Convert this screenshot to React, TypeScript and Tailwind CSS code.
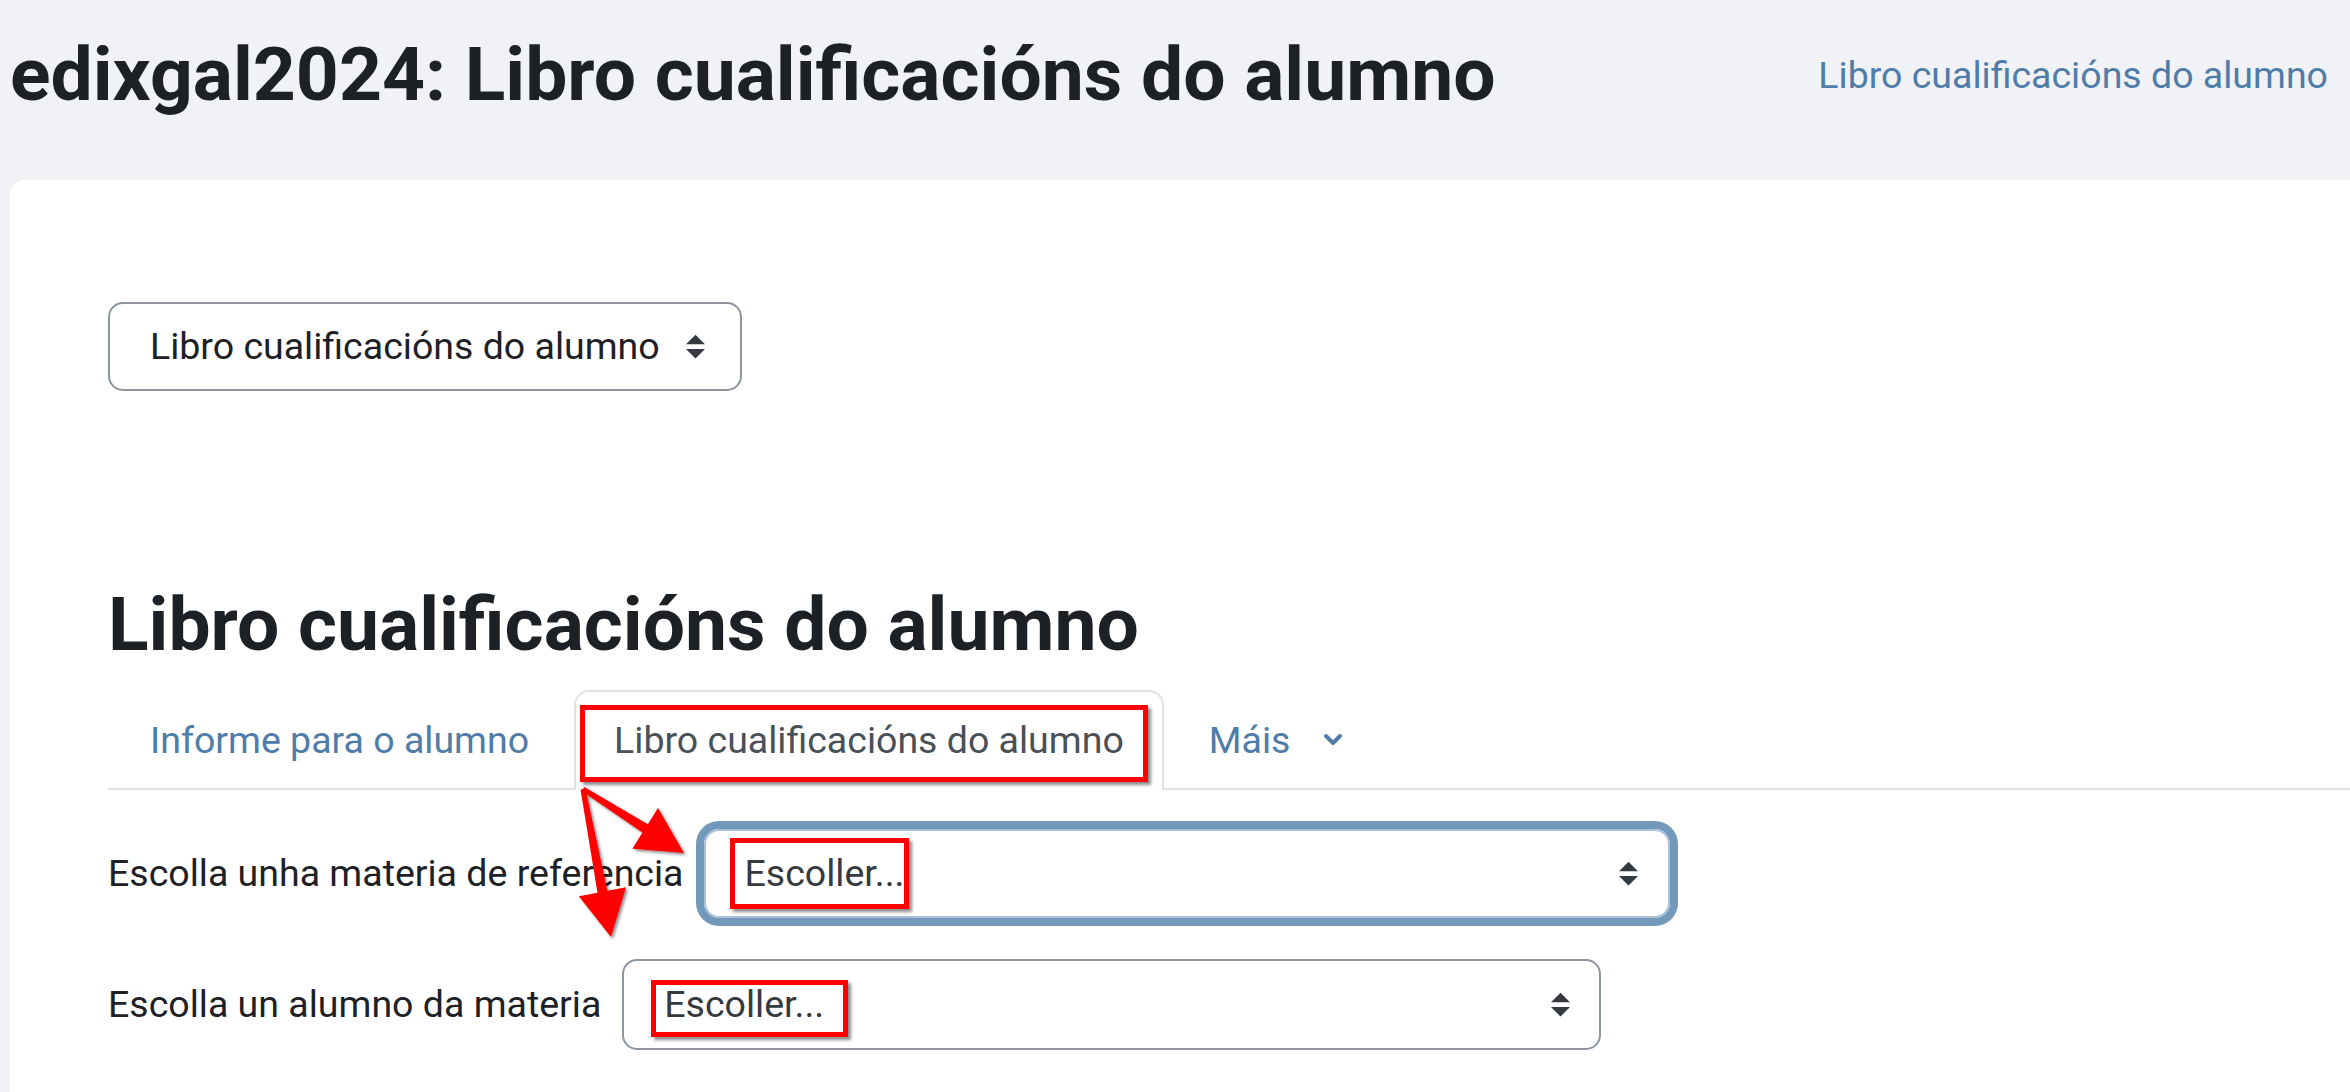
// Moodle-style gradebook page (zoomed) with red annotation boxes and arrows
import React from "react";

const FONT = { fontFamily: "Roboto, 'Noto Sans', 'Liberation Sans', sans-serif" };

// ─── Bootstrap-like select caret (up/down) ──────────────────────────────
function Caret() {
  return (
    <svg width="19" height="25" viewBox="0 0 4 5" className="shrink-0">
      <path d="M2 0L0 2h4zM2 5L0 3h4z" fill="#343a40" />
    </svg>
  );
}

function Chevron() {
  return (
    <svg width="20" height="14" viewBox="0 0 20 14" className="shrink-0">
      <polyline points="3,3 10,10 17,3" fill="none" stroke="#4f7ca8" strokeWidth="4" strokeLinecap="round" strokeLinejoin="round" />
    </svg>
  );
}

// ─── Arrow polygon (tapered shaft + head) ───────────────────────────────
function arrowPoints(x1: number, y1: number, x2: number, y2: number) {
  const dx = x2 - x1;
  const dy = y2 - y1;
  const len = Math.hypot(dx, dy);
  const ux = dx / len;
  const uy = dy / len;
  const nx = -uy;
  const ny = ux;
  const headLen = 46;
  const headW = 48;
  const s0 = 5;
  const s1 = 10;
  const bx = x2 - ux * headLen;
  const by = y2 - uy * headLen;
  const pts = [
    [x1 + (nx * s0) / 2, y1 + (ny * s0) / 2],
    [bx + (nx * s1) / 2, by + (ny * s1) / 2],
    [bx + (nx * headW) / 2, by + (ny * headW) / 2],
    [x2, y2],
    [bx - (nx * headW) / 2, by - (ny * headW) / 2],
    [bx - (nx * s1) / 2, by - (ny * s1) / 2],
    [x1 - (nx * s0) / 2, y1 - (ny * s0) / 2],
  ];
  return pts.map((p) => p.join(",")).join(" ");
}

function RedBox({ className }: { className: string }) {
  return (
    <div
      className={`absolute border-[5px] border-[#ff0000] shadow-[3px_3px_3px_rgba(0,0,0,0.45)] pointer-events-none ${className}`}
    />
  );
}

export default function App() {
  return (
    <div className="relative w-[2350px] h-[1092px] overflow-hidden bg-[#f0f2f6] text-[#1d2125]" style={FONT}>
      {/* ─── Page header ─────────────────────────────────────────────── */}
      <header className="flex justify-between items-start h-[180px] pt-[29px] pl-[10px] pr-[22px]">
        <h1 className="text-[75px] leading-[1.2] font-bold text-[#1d2125]">
          edixgal2024: Libro cualificacións do alumno
        </h1>
        <a className="mt-[24px] text-[37.5px] leading-[1.2] text-[#4f7ca8]">
          Libro cualificacións do alumno
        </a>
      </header>

      {/* ─── Main card ───────────────────────────────────────────────── */}
      <main className="ml-[10px] h-[912px] bg-white rounded-tl-[15px] pl-[98px] pt-[122px]">
        <div className="inline-flex items-center gap-[26px] h-[89px] pl-[40px] pr-[35px] border-2 border-[#8f959e] rounded-[15px] text-[37.5px] text-[#1d2125]">
          <span>Libro cualificacións do alumno</span>
          <Caret />
        </div>

        <h2 className="mt-[188px] text-[75px] leading-[1.2] font-bold text-[#1d2125]">
          Libro cualificacións do alumno
        </h2>

        {/* ─── Tabs ──────────────────────────────────────────────────── */}
        <nav className="mt-[21px] flex items-end border-b-2 border-[#dee2e6] text-[37.5px] leading-[56px]">
          <a className="px-[42px] pt-[22px] pb-[20px] text-[#4f7ca8]">Informe para o alumno</a>
          <a className="ml-[3px] -mb-[2px] px-[38px] pt-[20px] pb-[22px] bg-white border-2 border-b-0 border-[#dee2e6] rounded-t-[15px] text-[#495057]">
            Libro cualificacións do alumno
          </a>
          <a className="flex items-center gap-[33px] px-[45px] pt-[22px] pb-[20px] text-[#4f7ca8]">
            Máis
            <Chevron />
          </a>
        </nav>

        {/* ─── Form rows ─────────────────────────────────────────────── */}
        <div className="mt-[39px] flex flex-col gap-[41px] text-[37.5px]">
          <div className="flex items-center gap-[21px]">
            <label>Escolla unha materia de referencia</label>
            <div className="flex items-center justify-between w-[966px] h-[89px] pl-[38px] pr-[30px] border-2 border-[#a9c1d8] rounded-[15px] ring-[8px] ring-[#7399ba]">
              <span className="text-[#343a40]">Escoller...</span>
              <Caret />
            </div>
          </div>
          <div className="flex items-center gap-[21px]">
            <label>Escolla un alumno da materia</label>
            <div className="flex items-center justify-between w-[979px] h-[91px] pl-[40px] pr-[29px] border-2 border-[#8f959e] rounded-[15px]">
              <span className="text-[#343a40]">Escoller...</span>
              <Caret />
            </div>
          </div>
        </div>
      </main>

      {/* ─── Annotations ─────────────────────────────────────────────── */}
      <RedBox className="left-[580px] top-[705px] w-[568px] h-[77px]" />
      <RedBox className="left-[730px] top-[838px] w-[179px] h-[71px]" />
      <RedBox className="left-[651px] top-[980px] w-[197px] h-[57px]" />

      <svg className="absolute left-0 top-0 pointer-events-none" width="2350" height="1092">
        <defs>
          <filter id="sh" x="-20%" y="-20%" width="140%" height="140%">
            <feDropShadow dx="2" dy="2" stdDeviation="1.5" floodColor="#000" floodOpacity="0.45" />
          </filter>
        </defs>
        <g fill="#ff0000" filter="url(#sh)">
          <polygon points={arrowPoints(583, 789, 684, 853)} />
          <polygon points={arrowPoints(583, 789, 611, 937)} />
        </g>
      </svg>
    </div>
  );
}
